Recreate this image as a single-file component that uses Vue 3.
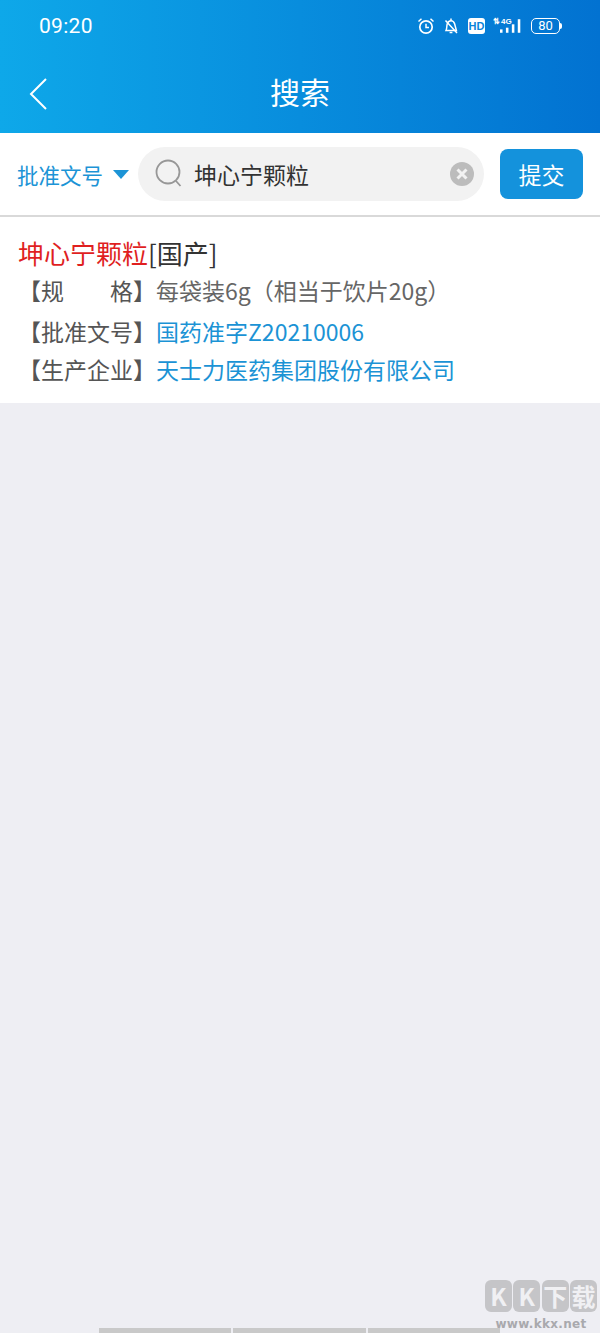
<template>
  <div class="page">
    <header class="header">
      <div class="status">
        <span class="time">09:20</span>
        <div class="status-icons">
          <svg width="18" height="18" viewBox="0 0 18 18" fill="none" stroke="#fff">
            <circle cx="9" cy="10" r="6.2" stroke-width="1.7" />
            <path d="M9 6.8V10.4H12" stroke-width="1.5" />
            <path d="M1.5 4.5L4.5 1.8M16.5 4.5L13.5 1.8" stroke-width="1.5" />
          </svg>
          <svg class="bell" width="16" height="18" viewBox="0 0 16 18" fill="none" stroke="#fff" stroke-width="1.5">
            <path d="M3 13.5C4 11.5 3.6 9 4.2 7C4.8 5 6.3 3.8 8 3.8C9.7 3.8 11 5 11.6 6.8L13.4 13.5Z" />
            <path d="M8 1.5V3.5M6.6 15.5H9.4M2.5 3.5L14 16" />
          </svg>
          <span class="hd">HD</span>
          <div class="signal">
            <span class="net"><i class="arrows">⇅</i>4G</span>
            <svg width="26" height="18" viewBox="0 0 26 18" fill="#fff">
              <rect x="0" y="13" width="3" height="4" />
              <rect x="7" y="11" width="3" height="6" />
              <rect x="14" y="7" width="3" height="10" />
              <rect x="21" y="1" width="3" height="16" />
            </svg>
          </div>
          <div class="battery">
            <span class="battery-body">80</span>
            <span class="battery-cap"></span>
          </div>
        </div>
      </div>
      <div class="nav">
        <svg class="back" width="20" height="32" viewBox="0 0 20 32" fill="none" stroke="#fff" stroke-width="2">
          <path d="M17 1L2 16L17 31" />
        </svg>
        <h1 class="title">搜索</h1>
      </div>
    </header>

    <div class="toolbar">
      <div class="picker">
        <span>批准文号</span>
        <i class="caret"></i>
      </div>
      <div class="search">
        <svg width="28" height="30" viewBox="0 0 28 30" fill="none" stroke="#979797" stroke-width="1.8">
          <circle cx="13" cy="13" r="11.5" />
          <path d="M21 22L25.5 27" />
        </svg>
        <span class="keyword">{{ keyword }}</span>
        <svg class="clear" width="24" height="24" viewBox="0 0 24 24">
          <circle cx="12" cy="12" r="12" fill="#bcbcbc" />
          <path d="M7.5 7.5L16.5 16.5M16.5 7.5L7.5 16.5" stroke="#f2f2f2" stroke-width="3" />
        </svg>
      </div>
      <button class="submit">提交</button>
    </div>

    <section class="result">
      <div class="name"><span class="red">{{ keyword }}</span>[国产]</div>
      <div v-for="row in rows" :key="row.label" class="row" :class="row.cls">
        <span class="label" v-html="row.label"></span>
        <span :class="{ link: row.link }">{{ row.value }}</span>
      </div>
    </section>

    <div class="rest"></div>

    <div class="home-bar">
      <span></span><span></span><span></span>
    </div>

    <div class="watermark">
      <div class="wm-logo">
        <span>K</span><span>K</span><span>下</span><span>载</span>
      </div>
      <div class="wm-url">www.kkx.net</div>
    </div>
  </div>
</template>

<script setup>
const keyword = "坤心宁颗粒";

const rows = [
  { label: "【规&emsp;&emsp;格】", value: "每袋装6g（相当于饮片20g）", link: false, cls: "row-spec" },
  { label: "【批准文号】", value: "国药准字Z20210006", link: true, cls: "row-code" },
  { label: "【生产企业】", value: "天士力医药集团股份有限公司", link: true, cls: "row-firm" },
];
</script>

<style>
html,
body {
  margin: 0;
  background: #eeeef3;
}
</style>

<style scoped>
.page {
  position: relative;
  width: 600px;
  height: 1333px;
  overflow: hidden;
  display: flex;
  flex-direction: column;
  background: #eeeef3;
  font-family: "Noto Sans CJK SC", "Noto Sans", sans-serif;
}

.header {
  height: 133px;
  flex: none;
  background: linear-gradient(90deg, #0ea8e9, #0272d1);
  color: #fff;
}

.status {
  height: 52px;
  display: flex;
  align-items: center;
  justify-content: space-between;
  padding: 0 38px 0 39px;
}

.time {
  font-family: Roboto, sans-serif;
  font-size: 21px;
  letter-spacing: 0.3px;
}

.status-icons {
  display: flex;
  align-items: center;
}

.bell {
  margin-left: 8px;
}

.hd {
  width: 17px;
  height: 16px;
  margin-left: 9px;
  border-radius: 3px;
  background: #fff;
  color: #0984da;
  font: 700 11px/16px "Liberation Sans", sans-serif;
  text-align: center;
}

.signal {
  position: relative;
  width: 28px;
  height: 18px;
  margin-left: 9px;
}

.signal svg {
  position: absolute;
  left: 6px;
  top: 0;
  width: 22px;
}

.net {
  position: absolute;
  left: -1px;
  top: 0;
  font: 700 8px/9px "Liberation Sans", sans-serif;
  white-space: nowrap;
}

.arrows {
  font-style: normal;
  margin-right: 1px;
}

.battery {
  display: flex;
  align-items: center;
  margin-left: 9px;
}

.battery-body {
  width: 27px;
  height: 14px;
  border: 1.5px solid #fff;
  border-radius: 5px;
  font: 13px/14px Roboto, sans-serif;
  text-align: center;
}

.battery-cap {
  width: 2px;
  height: 6px;
  background: #fff;
  border-radius: 0 2px 2px 0;
}

.nav {
  position: relative;
  height: 81px;
  display: flex;
  align-items: center;
  justify-content: center;
}

.back {
  position: absolute;
  left: 29px;
  top: 26px;
}

.title {
  margin: 0 0 4px;
  font-size: 30px;
  font-weight: 400;
}

.toolbar {
  height: 84px;
  flex: none;
  display: flex;
  align-items: center;
  box-sizing: border-box;
  padding: 0 17px;
  background: #fff;
  border-bottom: 2px solid #d9d9d9;
}

.picker {
  width: 121px;
  flex: none;
  display: flex;
  align-items: center;
  color: #1c94d6;
  font-size: 21.5px;
}

.caret {
  margin-left: 10px;
  border-style: solid;
  border-width: 9px 8px 0;
  border-color: #1c94d6 transparent transparent;
}

.search {
  width: 346px;
  height: 54px;
  flex: none;
  display: flex;
  align-items: center;
  box-sizing: border-box;
  padding: 0 10px 0 17px;
  border-radius: 27px;
  background: #f2f2f2;
}

.keyword {
  margin-left: 11px;
  color: #333;
  font-size: 23px;
}

.clear {
  margin-left: auto;
}

.submit {
  width: 83px;
  height: 50px;
  flex: none;
  margin-left: 16px;
  padding: 0;
  border: 0;
  border-radius: 8px;
  background: #1492dc;
  color: #fff;
  font-family: inherit;
  font-size: 23px;
}

.result {
  height: 186px;
  flex: none;
  box-sizing: border-box;
  padding: 18px 18px 0;
  background: #fff;
  color: #666;
  font-size: 23px;
}

.name {
  height: 35px;
  color: #333;
  font-size: 26px;
  line-height: 35px;
}

.red {
  color: #e01f1f;
}

.row {
  height: 38px;
  line-height: 38px;
  white-space: nowrap;
}

.row-spec {
  height: 42px;
  line-height: 40px;
}

.label {
  color: #555;
}

.link {
  color: #1b93d5;
}

.rest {
  flex: 1;
}

.home-bar {
  height: 5px;
  flex: none;
  display: flex;
  gap: 2px;
  padding: 0 100px 0 99px;
}

.home-bar span {
  flex: 1;
  background: #c9c9c9;
}

.watermark {
  position: absolute;
  right: 3px;
  bottom: 1px;
  width: 112px;
  text-align: center;
}

.wm-logo {
  display: flex;
  justify-content: space-between;
}

.wm-logo span {
  width: 27px;
  height: 32px;
  border-radius: 6px;
  background: #c5c5c8;
  color: #f0f0f3;
  font-size: 24px;
  font-weight: 700;
  line-height: 32px;
}

.wm-url {
  margin-top: 4px;
  color: #a9a9ad;
  font: 700 12px/16px "DejaVu Sans", sans-serif;
  letter-spacing: 0.3px;
}
</style>
